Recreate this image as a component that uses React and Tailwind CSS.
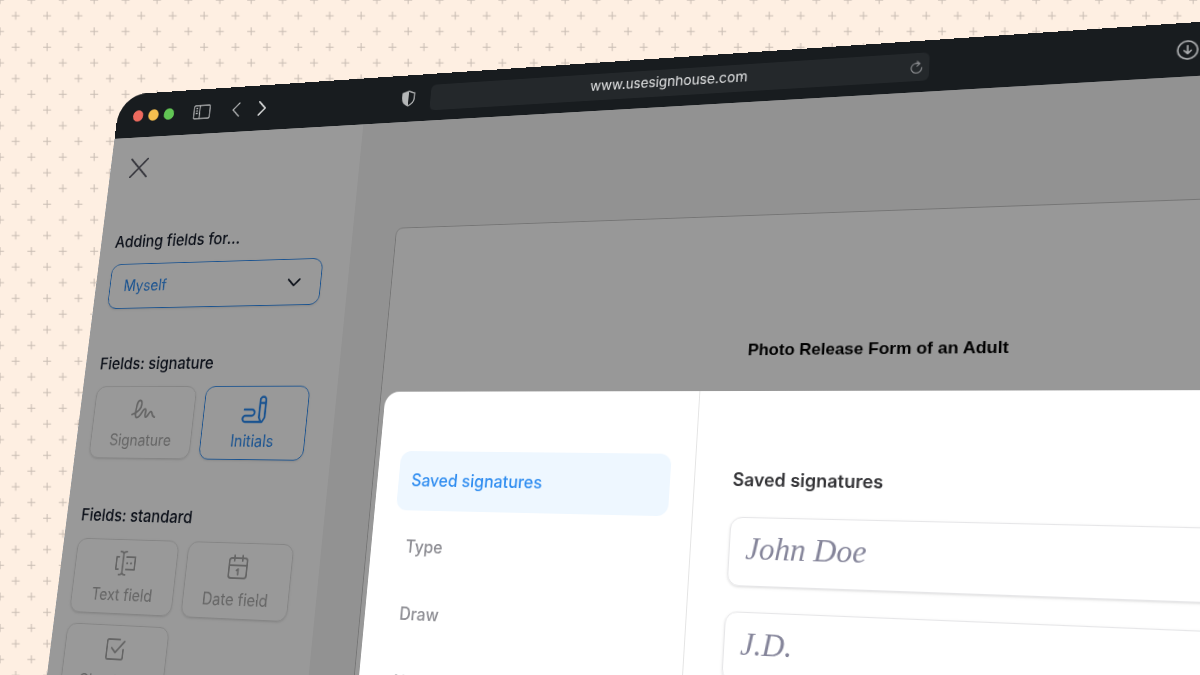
import React from 'react'

const FIELDS_STANDARD = [
  { label: 'Text field', icon: TextFieldIcon },
  { label: 'Date field', icon: DateFieldIcon },
  { label: 'Checkbox', icon: CheckboxIcon },
]

const TABS = ['Saved signatures', 'Type', 'Draw', 'Upload']

const SIGNATURES = ['John Doe', 'J.D.']

function CloseIcon() {
  return (
    <svg className="size-6" fill="none" stroke="currentColor" strokeWidth="2.4" strokeLinecap="round" viewBox="0 0 24 24">
      <path d="M1 1l22 22M23 1L1 23" />
    </svg>
  )
}

function SignatureIcon() {
  return (
    <svg className="h-7 w-9" fill="none" stroke="currentColor" strokeWidth="2.2" strokeLinecap="round" strokeLinejoin="round" viewBox="0 0 36 28">
      <path d="M3 20c7-2 12-7 11.500-13C14 2 9.500 2.500 8.500 8.500 7.500 15 6 23.500 10 23.500c5 0 6-10 9.500-10 3 0-1 9.500 2 9.500 2.500 0 3.500-6.500 6-6.500 2.500 0 1 5.500 5.500 6.500" />
    </svg>
  )
}

function InitialsIcon() {
  return (
    <svg className="h-8 w-9" fill="none" stroke="currentColor" strokeWidth="2.4" strokeLinecap="round" strokeLinejoin="round" viewBox="0 0 36 32">
      <path d="M5 16h9.500a3.500 3.500 0 010 7H7a3.500 3.500 0 000 7h19.500l-2.500-5V5a3.500 3.500 0 017 0v20l-3 5M24 8.500h7" />
    </svg>
  )
}

function TextFieldIcon() {
  return (
    <svg className="h-7 w-8" fill="none" stroke="currentColor" strokeWidth="2" strokeLinecap="round" strokeLinejoin="round" viewBox="0 0 32 28">
      <path d="M8.500 1c3 0 4 1 4 3v20c0 2-1 3-4 3M16.500 1c-3 0-4 1-4 3M16.500 27c-3 0-4-1-4-3M7 7H4v14h3M17 7h11v14H17" />
      <path d="M18 14h.1M23 14h.1" strokeWidth="2.400" />
    </svg>
  )
}

function DateFieldIcon() {
  return (
    <svg className="size-7" fill="none" stroke="currentColor" strokeWidth="2" strokeLinecap="round" strokeLinejoin="round" viewBox="0 0 28 28">
      <rect x="3" y="4" width="22" height="22" rx="3" />
      <path d="M3 12h22M9 1v6M19 1v6M12.500 17.500l2-1.500v6" />
    </svg>
  )
}

function CheckboxIcon() {
  return (
    <svg className="size-7" fill="none" stroke="currentColor" strokeWidth="2" strokeLinecap="round" strokeLinejoin="round" viewBox="0 0 28 28">
      <path d="M19 3H5a2 2 0 00-2 2v18a2 2 0 002 2h17a2 2 0 002-2v-9M9 12.500l5 5L25 5" />
    </svg>
  )
}

function Backdrop() {
  return (
    <svg className="absolute inset-0 size-full" aria-hidden="true">
      <defs>
        <pattern id="plus" width="31.4" height="31.4" patternUnits="userSpaceOnUse" x="-8" y="-8">
          <path d="M4 8h8M8 4v8M19.700 23.700h8M23.700 19.700v8" stroke="#c9bdb3" strokeWidth="1" />
        </pattern>
      </defs>
      <rect width="100%" height="100%" fill="url(#plus)" />
    </svg>
  )
}

function Toolbar() {
  return (
    <header className="flex h-[55px] items-center bg-[#181c1f] pl-[22px] text-[#b5b7b8]">
      <div className="flex gap-[7px]">
        <span className="size-[14px] rounded-full bg-[#ed6a5e]" />
        <span className="size-[14px] rounded-full bg-[#f5bf4f]" />
        <span className="size-[14px] rounded-full bg-[#61c554]" />
      </div>

      <button type="button" aria-label="Toggle sidebar" className="ml-[26px]">
        <svg className="h-[18px] w-[23px]" fill="none" stroke="currentColor" strokeWidth="1.400" viewBox="0 0 23 18">
          <rect x="1" y="1" width="21" height="16" rx="1.500" />
          <path d="M8.500 1v16M3.500 4.500h2.500M3.500 7.500h2.500M3.500 10.500h2.500" />
        </svg>
      </button>
      <button type="button" aria-label="Back" className="ml-7">
        <svg className="h-[18px] w-3" fill="none" stroke="currentColor" strokeWidth="1.600" strokeLinecap="round" strokeLinejoin="round" viewBox="0 0 12 18">
          <path d="M10 1L2 9l8 8" />
        </svg>
      </button>
      <button type="button" aria-label="Forward" className="ml-[22px] text-[#dcddde]">
        <svg className="h-[18px] w-3" fill="none" stroke="currentColor" strokeWidth="1.800" strokeLinecap="round" strokeLinejoin="round" viewBox="0 0 12 18">
          <path d="M2 1l8 8-8 8" />
        </svg>
      </button>

      <svg className="ml-[170px] h-[19px] w-[18px]" viewBox="0 0 18 20" aria-hidden="true">
        <path d="M9 1l7.500 2.500v6.500c0 4-3 7-7.500 9-4.500-2-7.500-5-7.500-9V3.500z" fill="none" stroke="currentColor" strokeWidth="1.500" />
        <path d="M9 1v18c-4.500-2-7.500-5-7.500-9V3.500z" fill="currentColor" />
      </svg>

      <div className="ml-[18px] flex h-[30px] w-[549px] items-center rounded-md bg-[#24282b] pr-1.5 pl-5">
        <input
          type="text"
          aria-label="Address"
          defaultValue="www.usesignhouse.com"
          className="min-w-0 flex-1 bg-transparent text-center text-[15px] text-[#e2e3e4] outline-none"
        />
        <button type="button" aria-label="Reload" className="text-[#85878a]">
          <svg className="size-[14px]" fill="none" stroke="currentColor" strokeWidth="1.400" strokeLinecap="round" strokeLinejoin="round" viewBox="0 0 16 16">
            <path d="M11.500 4.300a6 6 0 102.800 4.700M7.500 4h4.500M9 1l3 3-3 3" />
          </svg>
        </button>
      </div>

      <button type="button" aria-label="Downloads" className="ml-[236px] text-[#a9abad]">
        <svg className="size-5" fill="none" stroke="currentColor" strokeWidth="1.800" strokeLinecap="round" strokeLinejoin="round" viewBox="0 0 22 22">
          <circle cx="11" cy="11" r="10" />
          <path d="M11 6v9M7.500 11.500L11 15l3.500-3.500" />
        </svg>
      </button>
    </header>
  )
}

function FieldButton({ label, icon: Icon, active }) {
  return (
    <button
      type="button"
      className={
        active
          ? 'flex h-[84px] flex-col items-center gap-[10px] rounded-xl border border-[#2b8af0] pt-3 text-[#2b8af0] shadow-sm'
          : 'flex h-[84px] flex-col items-center gap-[10px] rounded-xl border border-[#dedede] pt-3 text-[#a8a8a8] shadow-sm'
      }
    >
      <span className="flex h-7 items-center"><Icon /></span>
      <span className="text-lg leading-6">{label}</span>
    </button>
  )
}

function Sidebar() {
  return (
    <aside className="w-[327px] shrink-0 bg-white pt-[26px] pr-[33px] pl-[19px] text-[#111827]">
      <button type="button" aria-label="Close" className="ml-2 block text-[#5b5b66]"><CloseIcon /></button>

      <label htmlFor="signer" className="mt-[65px] block text-[19px] leading-7 font-medium">Adding fields for...</label>
      <div className="relative mt-3">
        <select
          id="signer"
          className="h-[54px] w-full appearance-none rounded-xl border border-[#2b8af0] bg-white px-[18px] text-lg text-[#2b8af0] shadow-sm outline-none"
        >
          <option>Myself</option>
        </select>
        <svg className="pointer-events-none absolute top-[22px] right-6 h-3 w-5" fill="none" stroke="currentColor" strokeWidth="2" strokeLinecap="round" strokeLinejoin="round" viewBox="0 0 20 12">
          <path d="M3 2l7 7 7-7" />
        </svg>
      </div>

      <h2 className="mt-[52px] text-[19px] leading-7 font-medium">Fields: signature</h2>
      <div className="mt-3 grid grid-cols-2 gap-3">
        <FieldButton label="Signature" icon={SignatureIcon} />
        <FieldButton label="Initials" icon={InitialsIcon} active />
      </div>

      <h2 className="mt-[52px] text-[19px] leading-7 font-medium">Fields: standard</h2>
      <div className="mt-3 grid grid-cols-2 gap-3">
        {FIELDS_STANDARD.map((field) => (
          <FieldButton key={field.label} label={field.label} icon={field.icon} />
        ))}
      </div>
    </aside>
  )
}

function SignatureDialog() {
  return (
    <div role="dialog" aria-label="Signatures" className="flex flex-1 rounded-t-2xl bg-white">
      <nav className="flex w-[352px] flex-col gap-[7px] border-r border-[#e4e4e4] px-[25px] pt-[65px]">
        {TABS.map((tab, i) => (
          <button
            key={tab}
            type="button"
            className={
              i === 0
                ? 'h-16 rounded-xl bg-[#eef7ff] px-[15px] text-left text-lg font-medium text-[#2e8cf0]'
                : 'h-16 rounded-xl px-[15px] text-left text-lg font-medium text-[#8c8c92]'
            }
          >
            {tab}
          </button>
        ))}
      </nav>

      <section className="flex-1 px-[39px] pt-[77px]">
        <h2 className="text-lg leading-7 font-semibold text-[#333336]">Saved signatures</h2>
        <ul className="mt-[23px] flex flex-col gap-[25px]">
          {SIGNATURES.map((name) => (
            <li key={name} className="flex h-[69px] items-center rounded-xl border border-[#e6e6e8] px-4 pb-1 font-['Liberation_Serif',serif] text-[31px] text-[#85859a] italic shadow-sm">
              {name}
            </li>
          ))}
        </ul>
      </section>
    </div>
  )
}

const App = () => {
  return (
    <div className="relative h-screen overflow-hidden bg-[#feefe2] font-['Inter',sans-serif]">
      <Backdrop />

      {/* Browser window, tilted in perspective and running off the right and bottom edges */}
      <div className="w-[125vw] origin-top-left overflow-hidden rounded-tl-[36px] [transform:matrix3d(0.6996,-0.06376,0,-0.000159,-0.11021,0.78523,0,-0.0000861,0,0,1,0,120,95,0,1)]">
        <Toolbar />
        <div className="relative flex h-[125vh]">
          <Sidebar />
          <main className="flex-1 bg-[#f4f4f4] px-[53px] pt-[123px]">
            <article className="h-full rounded-t-lg border border-[#c4c4c4] bg-[#fdfdfd] pt-[130px]">
              <h1 className="text-center font-['Liberation_Sans',sans-serif] text-[17px] leading-6 font-bold text-black">
                Photo Release Form of an Adult
              </h1>
            </article>
          </main>

          <div className="absolute inset-0 flex bg-black/40 pt-[308px] pr-[53px] pl-[386px]">
            <SignatureDialog />
          </div>
        </div>
      </div>
    </div>
  )
}

export default App
